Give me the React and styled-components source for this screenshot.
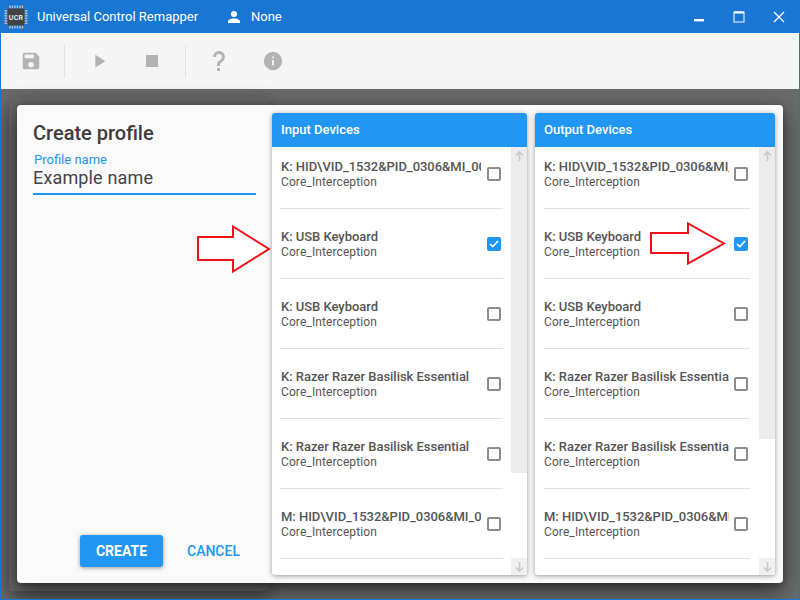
import React from "react";
import styled, { createGlobalStyle } from "styled-components";

const Global = createGlobalStyle`
  html, body { margin: 0; padding: 0; }
  * { box-sizing: border-box; }
  body { font-family: Roboto, "Liberation Sans", sans-serif; background: #fff; }
`;

const Window = styled.div`
  position: relative; width: 800px; height: 600px; display: flex; flex-direction: column;
  overflow: hidden; border: solid #1976d2; border-width: 0 1px 1px 1px; background: #6b6b6b;
`;
const TitleBar = styled.header`
  height: 33px; margin: 0 -1px; background: #1976d2; color: #fff; display: flex; align-items: center; flex: none;
`;
const Logo = styled.svg`
  width: 24px; height: 24px; margin-left: 4px; flex: none;
`;
const AppName = styled.span`
  margin-left: 9px; font-size: 13px; font-weight: 400; width: 161px; white-space: nowrap;
`;
const UserIcon = styled.svg`
  width: 18px; height: 18px; fill: #fff; margin-left: 27px; flex: none;
`;
const UserName = styled.span`
  margin-left: 8px; font-size: 13px; font-weight: 400;
`;
const WindowControls = styled.div`
  margin-left: auto; display: flex; height: 33px; padding-right: 1px;
`;
const WinButton = styled.button`
  width: 40px; height: 33px; padding: 0; border: 0; background: none; color: #fff;
  display: flex; align-items: center; justify-content: center;
`;
const Toolbar = styled.div`
  height: 56px; flex: none; background: #f5f5f5; display: flex; align-items: center; padding-left: 8px;
`;
const ToolIcon = styled.svg`
  fill: #b3b3b3; flex: none;
  width: ${p => p.$size || 22}px; height: ${p => p.$size || 22}px;
  margin-left: ${p => p.$ml || 0}px;
`;
const ToolSep = styled.div`
  width: 1px; height: 33px; background: #e2e2e2; flex: none; margin-left: ${p => p.$ml}px;
`;
const Content = styled.main`
  position: relative; flex: 1; padding: 8px;
`;
const BackCard = styled.div`
  width: 260px; height: 494px; border-radius: 3px; background: #666;
  box-shadow: 0 6px 16px rgba(0,0,0,.35);
`;
const Dialog = styled.section`
  position: absolute; left: 16px; top: 16px; width: 766px; height: 478px; background: #fafafa;
  border-radius: 4px; box-shadow: 0 8px 24px rgba(0,0,0,.55), 0 2px 6px rgba(0,0,0,.3);
  display: flex; padding: 8px 8px 8px 0;
`;
const FormPane = styled.div`
  width: 255px; flex: none; display: flex; flex-direction: column; padding: 8px 16px 8px 16px;
`;
const Title = styled.h1`
  margin: 0; font-size: 20px; line-height: 24px; font-weight: 500; color: #3c3c3c;
`;
const Label = styled.label`
  margin: 7px 0 0 1px; font-size: 13px; line-height: 15px; color: #2196f3;
`;
const Value = styled.div`
  font-size: 18px; line-height: 22px; color: #444; border-bottom: 2px solid #2196f3;
  letter-spacing: 0.15px; height: 28px;
`;
const Actions = styled.div`
  margin-top: auto; display: flex; align-items: center; padding-left: 47px; gap: 24px;
`;
const PrimaryButton = styled.button`
  width: 83px; height: 32px; border: 0; border-radius: 3px; background: #2196f3; color: #fff;
  font: 700 14px Roboto, sans-serif; box-shadow: 0 1px 4px rgba(0,0,0,.4); padding: 0;
`;
const TextButton = styled.button`
  border: 0; background: none; padding: 0; color: #2196f3; font: 500 14px Roboto, sans-serif;
`;
const Panel = styled.div`
  width: ${p => p.$w}px; margin-right: ${p => p.$mr || 0}px; flex: none; background: #fff; border-radius: 3px; overflow: hidden;
  display: flex; flex-direction: column; box-shadow: 0 1px 5px rgba(0,0,0,.4);
`;
const PanelHead = styled.div`
  height: 34px; flex: none; background: #2196f3; color: #fff; font-size: 13px; font-weight: 500;
  display: flex; align-items: center; padding: 0 0 2px ${p => p.$pl}px;
`;
const PanelBody = styled.div`
  flex: 1; min-height: 0; display: flex;
`;
const List = styled.div`
  flex: 1; min-width: 0;
`;
const Row = styled.div`
  height: 70px; margin: 0 ${p => p.$mr}px 0 ${p => p.$ml}px; padding-top: 19px; border-bottom: 1px solid #e0e0e0;
  display: flex; align-items: flex-start;
  &:first-child { height: 62px; padding-top: 11px; }
`;
const RowText = styled.div`
  width: ${p => p.$w}px; padding-left: ${p => p.$pl}px; flex: none; overflow: hidden; white-space: nowrap;
`;
const DeviceName = styled.div`
  font-size: 13px; line-height: 16px; font-weight: 500; color: #555; padding-top: 1px; margin-bottom: -1px;
  letter-spacing: -0.03px;
`;
const Provider = styled.div`
  font-size: 12px; line-height: 16px; color: #555; letter-spacing: 0.1px;
`;
const Box = styled.span`
  width: 14px; height: 14px; margin: 9px 0 0 ${p => p.$ml}px; flex: none; border-radius: 2px;
  border: ${p => (p.$on ? "0" : "2px solid #8c8c8c")}; background: ${p => (p.$on ? "#2196f3" : "#fff")};
  display: flex; align-items: center; justify-content: center;
`;
const Scrollbar = styled.div`
  width: 16px; flex: none; background: #fff; display: flex; flex-direction: column;
`;
const ScrollBtn = styled.div`
  height: 17px; flex: none; background: ${p => (p.$bare ? "transparent" : "#f0f0f0")};
  display: flex; align-items: center; justify-content: center;
`;
const Thumb = styled.div`
  height: ${p => p.$h}px; flex: none; background: #ececec;
`;
const Gap = styled.div`
  flex: 1;
`;
const Arrow = styled.svg`
  position: absolute; left: ${p => p.$x}px; top: ${p => p.$y}px; width: ${p => p.$w}px; height: ${p => p.$h}px; overflow: visible;
`;

const Up = ({ down }) => (
  <svg width="9" height="10" viewBox="0 0 9 10" fill="none" stroke="#c8c8c8" strokeWidth="1.6"
    style={{ transform: down ? "rotate(180deg)" : "none" }}>
    <path d="M4.5 10V1M1 4.5L4.5 1L8 4.5" />
  </svg>
);

const rows = [
  ["K: HID\\VID_1532&PID_0306&MI_00", false],
  ["K: USB Keyboard", true],
  ["K: USB Keyboard", false],
  ["K: Razer Razer Basilisk Essential", false],
  ["K: Razer Razer Basilisk Essential", false],
  ["M: HID\\VID_1532&PID_0306&MI_00", false],
];

function DevicePanel({ title, w, mr, pl, ml, rowMr, textW, textPl, boxMl, thumb }) {
  return (
    <Panel $w={w} $mr={mr}>
      <PanelHead $pl={pl}>{title}</PanelHead>
      <PanelBody>
        <List>
          {rows.map(([name, on], i) => (
            <Row key={i} $ml={ml} $mr={rowMr}>
              <RowText $w={textW} $pl={textPl}>
                <DeviceName>{name}</DeviceName>
                <Provider>Core_Interception</Provider>
              </RowText>
              <Box $on={on} $ml={boxMl}>
                {on && (
                  <svg width="10" height="8" viewBox="0 0 10 8" fill="none" stroke="#fff" strokeWidth="1.6">
                    <path d="M1 4L3.8 6.6L9 1" />
                  </svg>
                )}
              </Box>
            </Row>
          ))}
        </List>
        <Scrollbar>
          <Thumb $h={thumb}>
            <ScrollBtn $bare><Up /></ScrollBtn>
          </Thumb>
          <Gap />
          <ScrollBtn><Up down /></ScrollBtn>
        </Scrollbar>
      </PanelBody>
    </Panel>
  );
}

export default function App() {
  return (
    <>
      <Global />
      <Window>
        <TitleBar>
          <Logo viewBox="0 0 24 24">
            <g fill="#c4c4c4">
              {[4.5, 7, 9.5, 12, 14.5, 17].map(v => (
                <g key={v}>
                  <rect x={v + 0.7} y="0.5" width="1.4" height="3" />
                  <rect x={v + 0.7} y="20.5" width="1.4" height="3" />
                  <rect x="0.5" y={v + 0.7} width="3" height="1.4" />
                  <rect x="20.5" y={v + 0.7} width="3" height="1.4" />
                </g>
              ))}
            </g>
            <rect x="3.5" y="3.5" width="17" height="17" rx="1" fill="#424242" />
            <text x="12" y="14.5" textAnchor="middle" fontFamily="Roboto, sans-serif" fontSize="7" fontWeight="500" letterSpacing="0.3" fill="#fff">UCR</text>
          </Logo>
          <AppName>Universal Control Remapper</AppName>
          <UserIcon viewBox="0 0 24 24"><path d="M12,4A4,4 0 0,1 16,8A4,4 0 0,1 12,12A4,4 0 0,1 8,8A4,4 0 0,1 12,4M12,14C16.42,14 20,15.79 20,18V20H4V18C4,15.79 7.58,14 12,14Z" /></UserIcon>
          <UserName>None</UserName>
          <WindowControls>
            <WinButton>
              <svg width="12" height="12" viewBox="0 0 12 12"><rect x="1" y="8" width="10" height="2.4" fill="#fff" /></svg>
            </WinButton>
            <WinButton>
              <svg width="12" height="12" viewBox="0 0 12 12" fill="none" stroke="#fff"><rect x="1" y="1" width="10" height="10" /><path d="M1 1.5H11" strokeWidth="2" /></svg>
            </WinButton>
            <WinButton>
              <svg width="12" height="12" viewBox="0 0 12 12" fill="none" stroke="#fff" strokeWidth="1.3"><path d="M1 1L11 11M11 1L1 11" /></svg>
            </WinButton>
          </WindowControls>
        </TitleBar>
        <Toolbar>
          <ToolIcon viewBox="0 0 24 24" $ml={11}><path d="M15,9H5V5H15M12,19A3,3 0 0,1 9,16A3,3 0 0,1 12,13A3,3 0 0,1 15,16A3,3 0 0,1 12,19M17,3H5C3.89,3 3,3.9 3,5V19A2,2 0 0,0 5,21H19A2,2 0 0,0 21,19V7L17,3Z" /></ToolIcon>
          <ToolSep $ml={22} />
          <ToolIcon viewBox="0 0 24 24" $ml={23}><path d="M8,5.14V19.14L19,12.14L8,5.14Z" /></ToolIcon>
          <ToolIcon viewBox="0 0 24 24" $size={24} $ml={30}><path d="M18,18H6V6H18V18Z" /></ToolIcon>
          <ToolSep $ml={21} />
          <ToolIcon viewBox="0 0 24 24" $size={24} $ml={21}><path d="M10,19H13V22H10V19M12,2C17.35,2.22 19.68,7.62 16.5,11.67C15.67,12.67 14.33,13.33 13.67,14.17C13,15 13,16 13,17H10C10,15.33 10,13.92 10.67,12.92C11.33,11.92 12.67,11.33 13.5,10.67C15.92,8.43 15.32,5.26 12,5A3,3 0 0,0 9,8H6A6,6 0 0,1 12,2Z" /></ToolIcon>
          <ToolIcon viewBox="0 0 24 24" $ml={31}><path d="M13,9H11V7H13M13,17H11V11H13M12,2A10,10 0 0,0 2,12A10,10 0 0,0 12,22A10,10 0 0,0 22,12A10,10 0 0,0 12,2Z" /></ToolIcon>
        </Toolbar>
        <Content>
          <BackCard />
          <Dialog>
            <FormPane>
              <Title>Create profile</Title>
              <Label>Profile name</Label>
              <Value>Example name</Value>
              <Actions>
                <PrimaryButton>CREATE</PrimaryButton>
                <TextButton>CANCEL</TextButton>
              </Actions>
            </FormPane>
            <DevicePanel title="Input Devices" w={255} mr={8} pl={9} ml={8} rowMr={8} textW={201} textPl={1} boxMl={6} thumb={326} />
            <DevicePanel title="Output Devices" w={240} pl={9} ml={9} rowMr={9} textW={185} textPl={0} boxMl={5} thumb={292} />
          </Dialog>
          <Arrow $x={196} $y={136} $w={76} $h={48} viewBox="0 0 76 48">
            <path d="M1 12H36V1.5L72 24L36 46.5V35H1Z" fill="#fff" stroke="#f0101c" strokeWidth="2" />
          </Arrow>
          <Arrow $x={649} $y={133} $w={76} $h={44} viewBox="0 0 76 44">
            <path d="M1 11H38V1.5L74 21.5L38 41.5V31H1Z" fill="#fff" stroke="#f0101c" strokeWidth="2" />
          </Arrow>
        </Content>
      </Window>
    </>
  );
}
